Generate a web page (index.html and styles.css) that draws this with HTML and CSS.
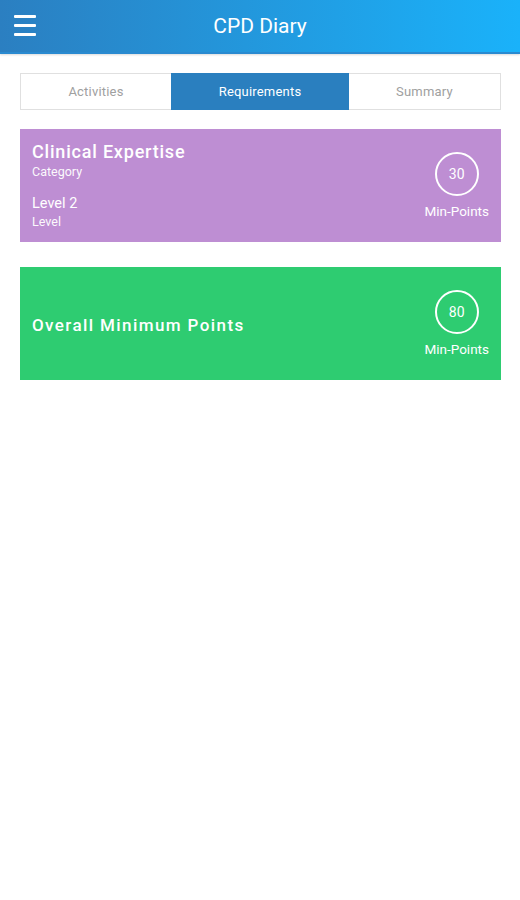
FILE: index.html
```
<!DOCTYPE html>
<html>
  <head>
    <title>CPD Diary</title>
    <link rel="stylesheet" href="styles.css">
  </head>
  <body>
    <div id="header">
      <div class="menu-icon">
        <span></span><span></span><span></span>
      </div>
      <div id="title">CPD Diary</div>
    </div>
    <div id="content">
      <div id="tabs">
        <div class="tab tab-first">Activities</div>
        <div class="tab tab-active">Requirements</div>
        <div class="tab tab-last">Summary</div>
      </div>
      <div class="card card-purple">
        <div class="card-info">
          <div class="card-title">Clinical Expertise</div>
          <div class="card-sub">Category</div>
          <div class="card-level">Level 2</div>
          <div class="card-sub">Level</div>
        </div>
        <div class="points">
          <div class="circle">30</div>
          <div class="points-label">Min-Points</div>
        </div>
      </div>
      <div class="card card-green">
        <div class="card-info">
          <div class="card-title">Overall Minimum Points</div>
        </div>
        <div class="points">
          <div class="circle">80</div>
          <div class="points-label">Min-Points</div>
        </div>
      </div>
    </div>
  </body>
</html>
```
FILE: styles.css
```
body {
  margin: 0;
  padding: 0;
  background-color: #ffffff;
  font-family: Roboto, "Liberation Sans", sans-serif;
}

#header {
  height: 52px;
  display: flex;
  align-items: center;
  justify-content: center;
  position: relative;
  background: linear-gradient(to right, #2b7fc1, #1ab2fa);
  border-bottom: 2px solid #2a8ad0;
  box-shadow: 0 1px 2px rgba(0, 0, 0, 0.15);
}

.menu-icon {
  position: absolute;
  left: 14px;
  top: 15px;
  width: 22px;
  display: flex;
  flex-direction: column;
  gap: 6px;
}

.menu-icon span {
  display: block;
  height: 3px;
  background-color: #ffffff;
  border-radius: 1px;
}

#title {
  color: #ffffff;
  font-size: 21px;
}

#content {
  padding: 19px 19px 0 20px;
}

#tabs {
  display: flex;
  height: 37px;
  border: 1px solid #e0e0e0;
  box-sizing: border-box;
}

.tab {
  display: flex;
  align-items: center;
  justify-content: center;
  font-size: 13px;
  color: #a0a0a0;
  letter-spacing: 0.2px;
}

.tab-first {
  width: 150px;
}

.tab-active {
  width: 178px;
  background-color: #2a7fbf;
  color: #ffffff;
  margin-top: -1px;
  margin-bottom: -1px;
}

.tab-last {
  flex: 1;
}

.card {
  display: flex;
  justify-content: space-between;
  height: 113px;
  margin-top: 19px;
  padding: 0 12px;
  color: #ffffff;
  box-sizing: border-box;
}

.card-purple {
  background-color: #be8ed3;
}

.card-purple .card-info {
  padding-top: 12px;
}

.card-green {
  background-color: #2ecc71;
  margin-top: 25px;
}

.card-green .card-info {
  display: flex;
  align-items: center;
}

.card-title {
  font-size: 18px;
  font-weight: 500;
  letter-spacing: 0.8px;
}

.card-green .card-title {
  font-size: 17px;
  letter-spacing: 1.4px;
  margin-top: 2px;
}

.card-sub {
  font-size: 12.5px;
  margin-top: 2px;
  opacity: 0.95;
}

.card-level {
  font-size: 14.5px;
  margin-top: 16px;
}

.points {
  display: flex;
  flex-direction: column;
  align-items: center;
  justify-content: center;
}

.circle {
  width: 40px;
  height: 40px;
  border: 2px solid #ffffff;
  border-radius: 50%;
  display: flex;
  align-items: center;
  justify-content: center;
  font-size: 14px;
}

.points-label {
  font-size: 13.5px;
  margin-top: 7px;
}
```
